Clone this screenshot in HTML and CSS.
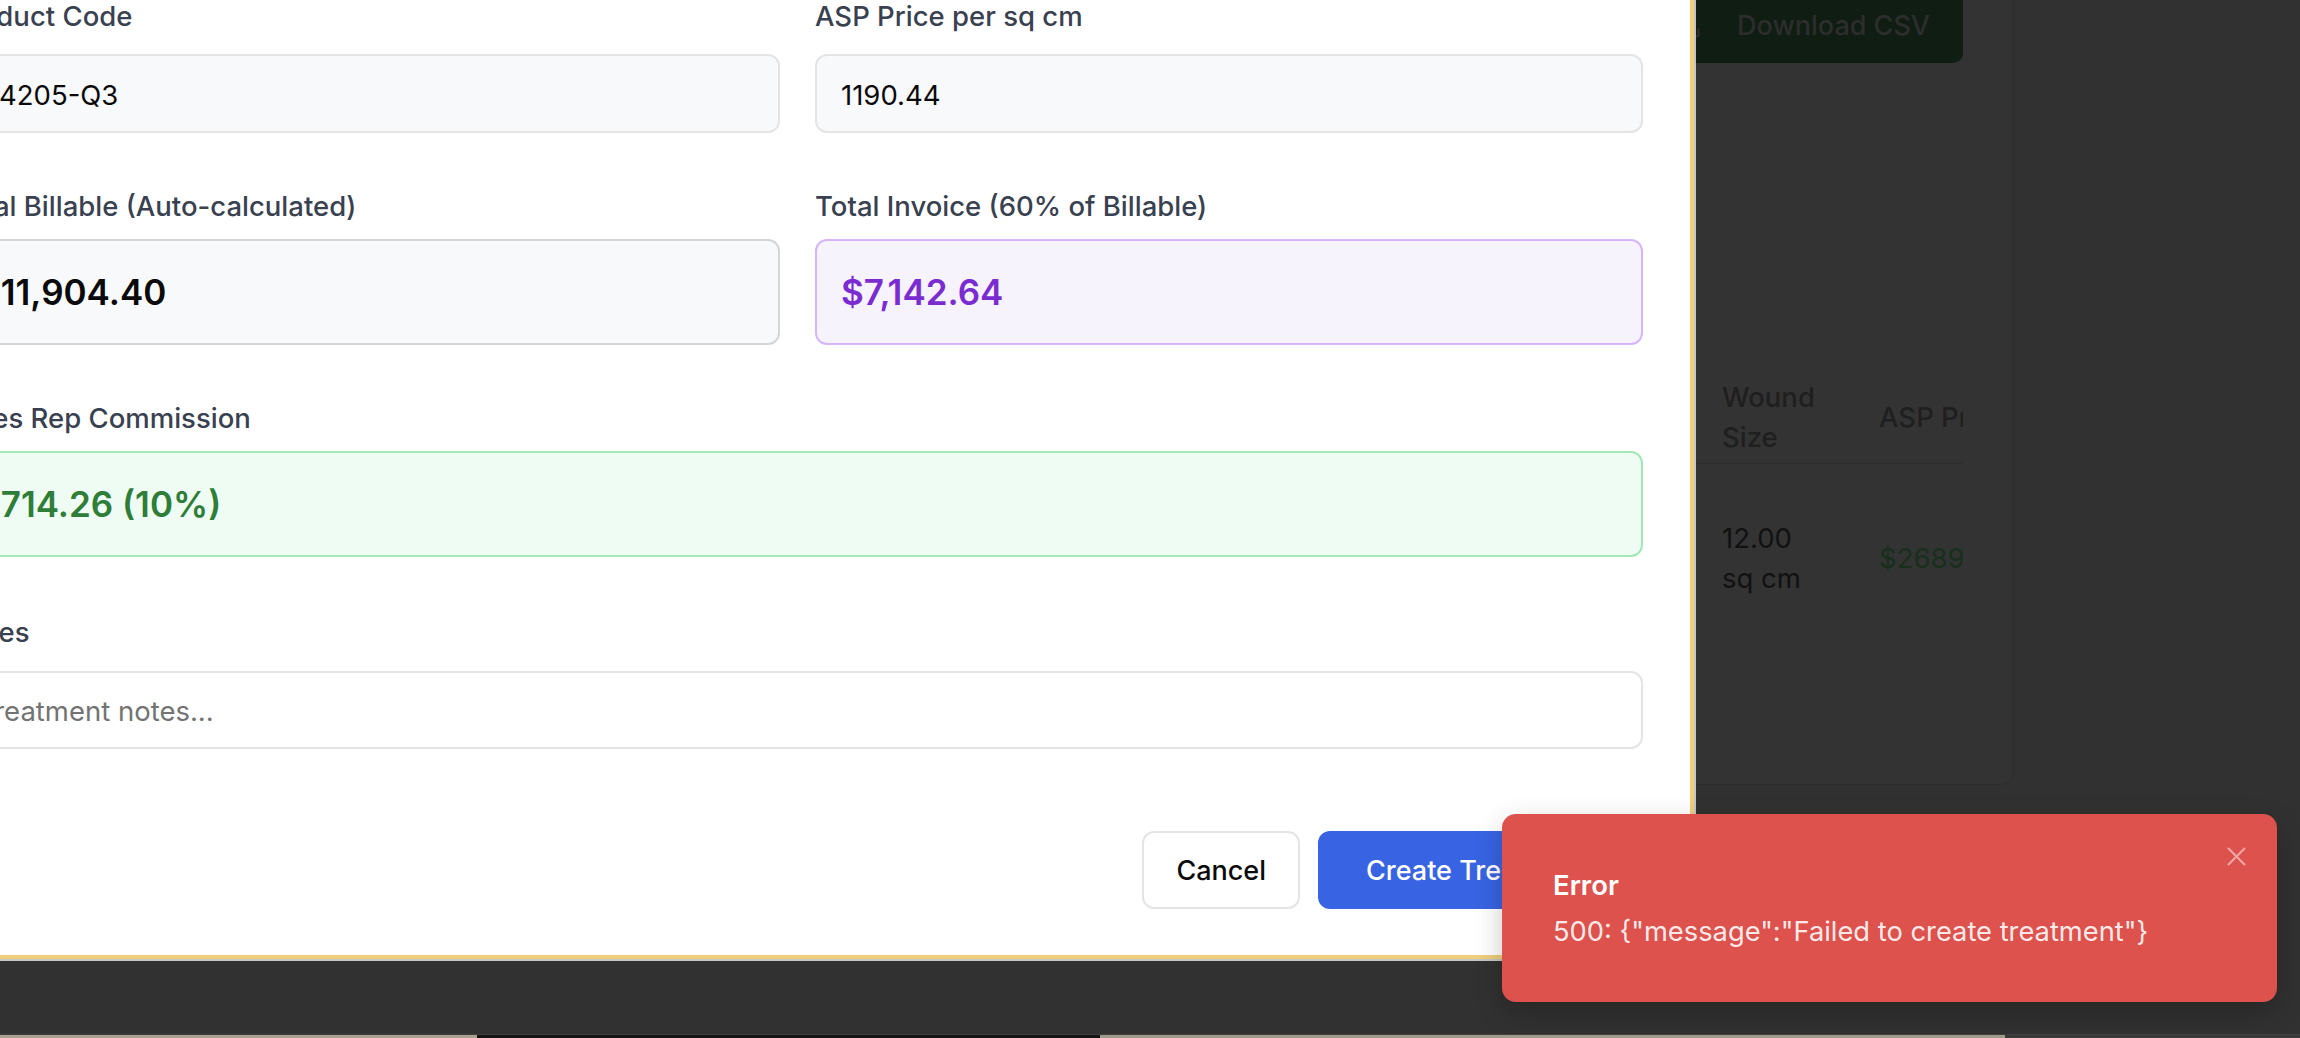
FILE: index.html
```html
<!DOCTYPE html>
<html lang="en">
<head>
<meta charset="utf-8">
<title>Create Treatment</title>
<link rel="stylesheet" href="styles.css">
</head>
<body>
<div class="page">
  <section class="card">
    <div class="card-head">
      <button class="btn-csv" type="button">
        <svg class="ico" viewBox="0 0 24 24" fill="none" stroke="currentColor" stroke-width="2" stroke-linecap="round" stroke-linejoin="round"><path d="M21 15v4a2 2 0 0 1-2 2H5a2 2 0 0 1-2-2v-4"/><path d="M7 10l5 5 5-5"/><path d="M12 15V3"/></svg>
        <span>Download CSV</span>
      </button>
    </div>
    <div class="table-wrap">
      <table class="tbl">
        <colgroup>
          <col class="c-date"><col class="c-patient"><col class="c-product"><col class="c-size"><col class="c-asp"><col class="c-total">
        </colgroup>
        <thead>
          <tr><th>Date</th><th>Patient</th><th>Product</th><th>Wound Size</th><th>ASP Price</th><th>Total</th></tr>
        </thead>
        <tbody>
          <tr><td>04/12/2025</td><td>Patient</td><td>Q4205-Q3</td><td>12.00 sq cm</td><td class="money">$2689.20</td><td class="money">$32,270.40</td></tr>
        </tbody>
      </table>
    </div>
  </section>
</div>

<div class="modal" role="dialog" aria-label="Create Treatment">
  <form class="form">
    <div class="fields">
      <div class="field">
        <label class="lbl" for="code">Product Code</label>
        <input class="inp" id="code" type="text" value="Q4205-Q3" readonly>
      </div>
      <div class="field">
        <label class="lbl" for="asp">ASP Price per sq cm</label>
        <input class="inp" id="asp" type="text" value="1190.44" readonly>
      </div>
      <div class="field calc">
        <label class="lbl" for="billable">Total Billable (Auto-calculated)</label>
        <input class="inp big gray" id="billable" type="text" value="$11,904.40" readonly>
      </div>
      <div class="field calc">
        <label class="lbl" for="invoice">Total Invoice (60% of Billable)</label>
        <input class="inp big purple" id="invoice" type="text" value="$7,142.64" readonly>
      </div>
      <div class="field calc wide">
        <label class="lbl" for="commission">Sales Rep Commission</label>
        <input class="inp big green" id="commission" type="text" value="$714.26 (10%)" readonly>
      </div>
      <div class="field notes wide">
        <label class="lbl" for="notes">Notes</label>
        <input class="inp plain" id="notes" type="text" placeholder="Treatment notes...">
      </div>
    </div>
    <div class="actions">
      <button class="btn btn-cancel" type="button">Cancel</button>
      <button class="btn btn-primary" type="submit">Create Treatment</button>
    </div>
  </form>
</div>

<div class="toast" role="alert">
  <div class="toast-title">Error</div>
  <div class="toast-desc">500: {"message":"Failed to create treatment"}</div>
  <button class="toast-close" type="button" aria-label="Close">
    <svg viewBox="0 0 19 19" fill="none" stroke="currentColor" stroke-width="2" stroke-linecap="round"><path d="M1.5 1.5l16 16M17.5 1.5l-16 16"/></svg>
  </button>
</div>

<div class="dock"></div>
</body>
</html>
```

FILE: styles.css
```css
* { box-sizing: border-box; }

html, body {
  margin: 0;
  padding: 0;
}

body {
  width: 2300px;
  height: 1038px;
  overflow: hidden;
  position: relative;
  background: #313131;
  font-family: Inter, "Noto Sans", "Liberation Sans", sans-serif;
}

/* ---------- dimmed page behind the dialog ---------- */
.page {
  display: flex;
  justify-content: flex-end;
  padding-right: 287px;
}

.card {
  width: 1700px;
  height: 825px;
  margin-top: -40px;
  background: #333333;
  border: 1px solid #2c2c2c;
  border-radius: 12px;
  padding: 27px 49px 0 49px;
}

.card-head {
  display: flex;
  justify-content: flex-end;
}

.btn-csv {
  height: 75px;
  display: inline-flex;
  align-items: center;
  padding: 0 33px 0 30px;
  border: 0;
  border-radius: 10px;
  background: #0f1d12;
  color: #2d2d2d;
  font-family: inherit;
  font-size: 27px;
  font-weight: 500;
}

.btn-csv .ico {
  width: 28px;
  height: 28px;
  margin-right: 35px;
}

.table-wrap {
  margin-top: 314px;
  overflow: hidden;
}

.tbl {
  width: 1990px;
  table-layout: fixed;
  border-collapse: collapse;
  font-size: 27.5px;
  line-height: 40px;
}

.c-date { width: 400px; }
.c-patient { width: 433px; }
.c-product { width: 500px; }
.c-size { width: 157px; }
.c-asp { width: 250px; }
.c-total { width: 250px; }

.tbl th {
  text-align: left;
  font-weight: 500;
  color: #1f1f1f;
  padding: 0 26px 6px;
  vertical-align: middle;
  border-bottom: 1px solid #2c2c2c;
}

.tbl td {
  color: #111111;
  padding: 54px 26px;
  vertical-align: middle;
}

.tbl td.money { color: #172f1b; }

/* ---------- dialog ---------- */
.modal {
  position: absolute;
  left: -99px;
  top: -51px;
  background: #ffffff;
  border: 4px solid #efcf7c;
  border-radius: 12px;
  box-shadow: 0 0 0 2px rgba(225, 225, 225, 0.85);
  padding: 47px 47px 46px 47px;
}

.fields {
  display: grid;
  grid-template-columns: 828px 828px;
  column-gap: 35px;
  row-gap: 57px;
}

.field {
  display: flex;
  flex-direction: column;
}

.field.wide { grid-column: 1 / -1; }
.field.notes { margin-top: 2px; }

.lbl {
  font-size: 27.5px;
  line-height: 32px;
  font-weight: 500;
  color: #394150;
  margin-bottom: 22px;
  white-space: nowrap;
}

.field.calc .lbl { margin-bottom: 17px; }
.field.notes .lbl { margin-bottom: 23px; }

.inp {
  width: 100%;
  height: 79px;
  margin: 0;
  padding: 3px 24px 0;
  border: 2px solid #e4e4e4;
  border-radius: 12px;
  background: #f8f9fa;
  color: #0a0a0a;
  font-family: inherit;
  font-size: 27.5px;
  outline: none;
}

.inp::placeholder { color: #737373; opacity: 1; }

.inp.big {
  height: 106px;
  padding-top: 0;
  font-size: 35px;
  font-weight: 600;
}

.inp.gray {
  border-color: #d3d5d9;
  background: #f8f9fa;
}

.inp.purple {
  border-color: #d6b5fb;
  background: #f7f3fd;
  color: #7b2cd1;
}

.inp.green {
  border-color: #a2e8b6;
  background: #effcf3;
  color: #2e7d38;
}

.inp.plain {
  height: 78px;
  background: #ffffff;
  padding-top: 2px;
}

.actions {
  display: flex;
  justify-content: flex-end;
  gap: 18px;
  margin-top: 82px;
}

.btn {
  height: 78px;
  border-radius: 12px;
  font-family: inherit;
  font-size: 27px;
  font-weight: 500;
}

.btn-cancel {
  padding: 0 32px;
  border: 2px solid #e4e4e4;
  background: #ffffff;
  color: #0a0a0a;
}

.btn-primary {
  width: 325px;
  padding: 0 0 0 48px;
  text-align: left;
  border: 0;
  background: #3864e3;
  color: #ffffff;
}

/* ---------- toast ---------- */
.toast {
  position: absolute;
  left: 1502px;
  top: 814px;
  width: 775px;
  height: 188px;
  padding: 0 51px;
  display: flex;
  flex-direction: column;
  justify-content: center;
  gap: 9px;
  background: #dd524c;
  border-radius: 14px;
  box-shadow: 0 10px 28px rgba(0, 0, 0, 0.22);
  color: #ffffff;
}

.toast-title {
  font-size: 27.5px;
  line-height: 38px;
  font-weight: 600;
}

.toast-desc {
  font-size: 27.3px;
  line-height: 38px;
  color: rgba(255, 255, 255, 0.9);
}

.toast-close {
  position: absolute;
  top: 33px;
  right: 31px;
  width: 19px;
  height: 19px;
  padding: 0;
  border: 0;
  background: transparent;
  color: rgba(255, 255, 255, 0.5);
}

.toast-close svg {
  display: block;
  width: 19px;
  height: 19px;
}

/* ---------- bottom window edge ---------- */
.dock {
  position: absolute;
  left: 0;
  right: 0;
  bottom: 0;
  height: 4px;
  border-top: 1px solid #404040;
  background: linear-gradient(to right, #a8a190 0 477px, #141414 477px 1100px, #9f998a 1100px 2005px, #3a3a3a 2005px);
}
```
